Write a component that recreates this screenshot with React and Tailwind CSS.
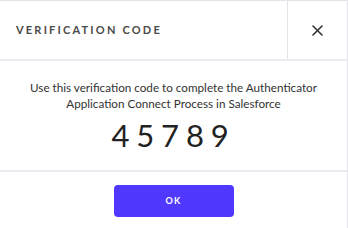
export default function App() {
    return (
        <div className="w-[348px] h-[228px] bg-white font-['Lato',sans-serif] overflow-hidden">
            <div className="w-[348px] h-[228px] border-r border-t border-[#e4e3ec] flex flex-col">
                {/* Header */}
                <div className="flex h-[60px] border-b-2 border-[#ebeaf1]">
                    <div className="flex-1 flex items-center pl-4 text-[11px] font-bold tracking-[0.2em] text-[#4a4a4a]">
                        VERIFICATION CODE
                    </div>
                    <div className="w-[60px] border-l border-[#e4e3ec] flex items-center justify-center">
                        <svg width="11" height="11" viewBox="0 0 11 11" fill="none" stroke="#333" strokeWidth="1.6" strokeLinecap="round">
                            <path d="M1 1L10 10M10 1L1 10" />
                        </svg>
                    </div>
                </div>

                {/* Body */}
                <div className="h-[111px] border-b-2 border-[#ebeaf1] flex flex-col items-center pt-[18px]">
                    <p className="text-[11.7px] leading-[16px] text-[#333] text-center">
                        Use this verification code to complete the Authenticator
                        <br />
                        Application Connect Process in Salesforce
                    </p>
                    <div className="mt-[7px] text-[31px] leading-[34px] tracking-[0.22em] text-[#222]">
                        45789
                    </div>
                </div>

                {/* Footer */}
                <div className="flex-1 flex justify-center pt-[13px]">
                    <button className="w-[120px] h-[32px] rounded-[4px] bg-[#5038ff] text-white text-[9px] font-bold tracking-[0.15em]">
                        OK
                    </button>
                </div>
            </div>
        </div>
    );
}
